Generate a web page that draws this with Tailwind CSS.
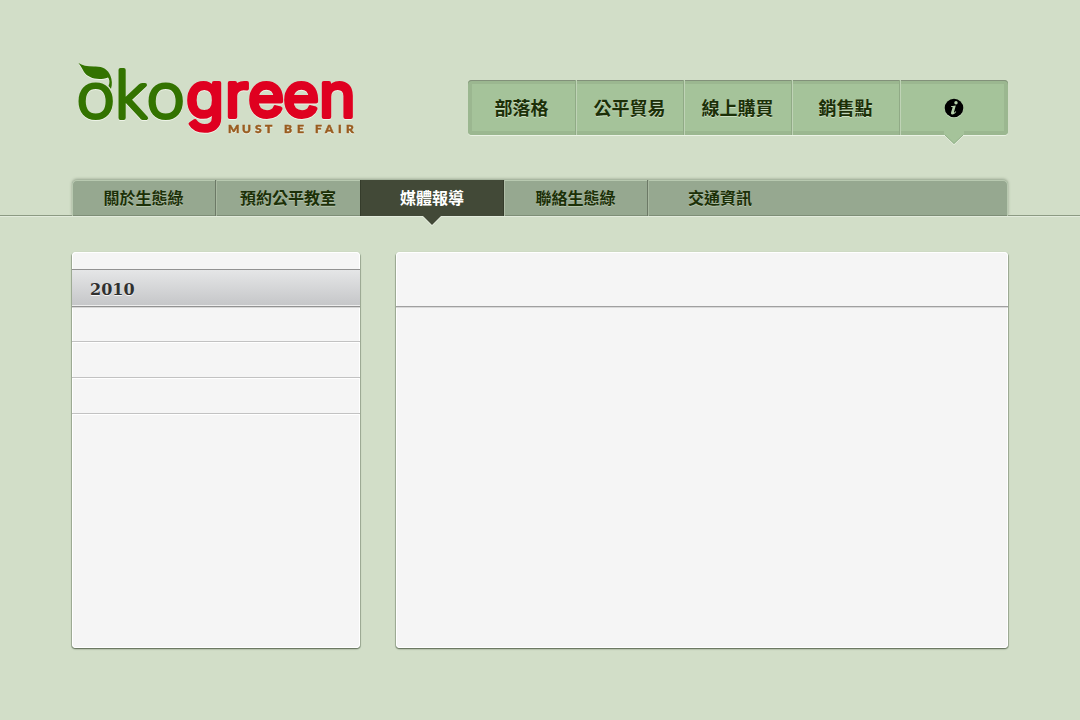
<!DOCTYPE html>
<html lang="zh-Hant">
<head>
<meta charset="utf-8">
<meta name="viewport" content="width=device-width, initial-scale=1">
<title>ökogreen</title>
<script src="https://cdn.jsdelivr.net/npm/@tailwindcss/browser@4"></script>
</head>
<body class="min-h-screen bg-[#d2dec8] font-['Noto_Sans_CJK_TC',sans-serif] text-[#1c3008]">
<header>
  <div class="mx-auto flex h-[180px] max-w-[936px] items-start justify-between">
    <a href="#" aria-label="ökogreen" class="mt-15">
      <svg width="288" height="80" viewBox="72 60 288 80" class="block overflow-visible drop-shadow-[0_1px_0_#eef4e8]">
        <g stroke-linejoin="round">
          <text font-family="Lato" font-size="67" font-weight="300" fill="#337300" stroke="#337300" stroke-width="4" x="77 115 147" y="118">oko</text>
          <text font-family="Inter" font-size="62" font-weight="400" fill="#df0020" stroke="#df0020" stroke-width="4" x="186 225 248 283 319" y="117">green</text>
        </g>
        <path fill="#337300" d="M78.500 63C82 65.500 87 66.500 94 66.500C102 66 108 69 110.500 76C112 80 112.500 84 111 89L108.500 86C110 82 109.500 79.500 108 77.500C98 81 88 78 84 72C82 68 80 65 78.500 63Z"/>
        <text fill="#995c20" stroke="#995c20" stroke-width=".5" font-family="Lato" font-size="12" font-weight="900" x="228 242 255 265 275 284 297 307 315 325 338 346" y="133">MUST BE FAIR</text>
      </svg>
    </a>
    <nav aria-label="主選單" class="relative mt-20 grid h-[55px] w-[540px] grid-cols-5 rounded-[4px] bg-[#a5c39a] text-lg font-bold shadow-[inset_0_1px_0_#82917a,inset_0_0_0_4px_#9bb790,0_1px_0_#eaf2e4] [text-shadow:0_1px_0_#cbdec3]">
      <a href="#" class="flex items-center justify-center border-r border-[#90aa86] pb-0.5">部落格</a>
      <a href="#" class="flex items-center justify-center border-r border-[#90aa86] pb-0.5 shadow-[inset_1px_0_0_#bfd3b6]">公平貿易</a>
      <a href="#" class="flex items-center justify-center border-r border-[#90aa86] pb-0.5 shadow-[inset_1px_0_0_#bfd3b6]">線上購買</a>
      <a href="#" class="flex items-center justify-center border-r border-[#90aa86] pb-0.5 shadow-[inset_1px_0_0_#bfd3b6]">銷售點</a>
      <a href="#" aria-label="資訊" class="relative flex items-center justify-center shadow-[inset_1px_0_0_#bfd3b6]">
        <svg width="20" height="20" viewBox="0 0 20 20"><circle cx="10" cy="11" r="9.300" fill="#c5dbbd"/><circle cx="10" cy="10" r="9.300" fill="#000"/><circle cx="12" cy="4.800" r="1.700" fill="#b5d0aa"/><path fill="#b5d0aa" d="M7 8.300L11.800 7.500L10 14.100C9.800 15 10.600 14.500 11.700 13.200L12.200 13.700C11 15.600 9.500 16.500 8.200 16.400C7 16.300 6.800 15.300 7.200 14L8.600 9.500C8.700 9 8.200 8.900 7 8.900Z"/></svg>
        <svg class="absolute top-[51px] left-1/2 -translate-x-1/2" width="20" height="14" viewBox="0 0 20 14"><path d="M0 4L10 14L20 4" fill="#edf4e8"/><path d="M0 0H20V3L10 13L0 3Z" fill="#a5c39a"/><path d="M1 4L10 12.500L19 4" fill="none" stroke="#91af87"/></svg>
      </a>
    </nav>
  </div>
  <div class="h-9 shadow-[inset_0_-1px_0_#8c9a83,0_1px_0_#e2ebdc]">
    <nav aria-label="次選單" class="mx-auto grid h-full max-w-[936px] grid-cols-[144px_144px_144px_144px_144px_1fr] rounded-t-[5px] bg-[#96a890] text-base font-bold shadow-[inset_1px_0_0_#b8c9b0,inset_-1px_0_0_#b8c9b0,inset_0_1px_0_#b8c9b0,inset_0_-1px_0_#7e8e77,0_-1px_3px_#94a28c] [clip-path:inset(-4px_-4px_0_-4px)] [text-shadow:0_1px_0_#b3c4ab]">
      <a href="#" class="flex items-center justify-center border-r border-[#6c7966] pb-0.5">關於生態綠</a>
      <a href="#" class="flex items-center justify-center pb-0.5 shadow-[inset_1px_0_0_#a9b9a1]">預約公平教室</a>
      <a href="#" aria-current="page" class="flex items-center justify-center border-x border-[#353c2b] bg-[#424937] pb-0.5 text-white text-shadow-none">媒體報導</a>
      <a href="#" class="flex items-center justify-center border-r border-[#6c7966] pb-0.5 shadow-[inset_1px_0_0_#b0bea8]">聯絡生態綠</a>
      <a href="#" class="flex items-center justify-center pb-0.5 shadow-[inset_1px_0_0_#a9b9a1]">交通資訊</a>
    </nav>
    <div class="relative mx-auto max-w-[936px]">
      <svg class="absolute top-0 left-[351px]" width="18" height="10" viewBox="0 0 18 10"><path d="M0 1L9 10L18 1" fill="#edf4e8"/><path d="M0 0H18L9 9Z" fill="#424937"/></svg>
    </div>
  </div>
</header>
<main class="mx-auto mt-9 grid max-w-[936px] grid-cols-[288px_1fr] gap-9 pb-18 [&>*]:shadow-[inset_0_0_0_1px_#fff,0_1px_1px_#66745e,-1px_1px_0_#a3b19b,1px_1px_0_#a3b19b,0_1px_2px_#8f9d86]">
  <aside class="min-h-[396px] rounded-[4px] bg-[#f5f5f5] pt-4">
    <h2 class="mt-px flex h-[38px] items-center border-t border-b border-[#929292] bg-linear-to-b from-[#e5e6e7] to-[#c5c6c8] px-[18px] pt-1 font-['DejaVu_Serif',serif] text-base font-bold text-[#303030] shadow-[inset_0_-1px_0_#ededed,0_1px_0_#d6d6d6] [text-shadow:0_1px_0_#f5f5f5]">2010</h2>
    <ul>
      <li class="h-[35px] border-b border-[#c2c2c2]"></li>
      <li class="h-9 border-b border-[#c2c2c2] shadow-[inset_0_1px_0_#fff]"></li>
      <li class="h-9 border-b border-[#c2c2c2] shadow-[inset_0_1px_0_#fff,0_1px_0_#fff]"></li>
    </ul>
  </aside>
  <article class="min-h-[396px] rounded-[4px] bg-[#f5f5f5]">
    <div class="h-[55px] border-b border-[#a0a0a0] shadow-[0_1px_0_#d9d9d9]"></div>
  </article>
</main>
</body>
</html>
